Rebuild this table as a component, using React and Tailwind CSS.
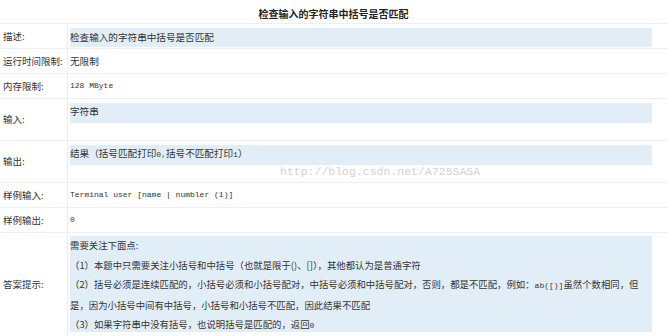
import React from 'react';

const cjk = { fontFamily: '"Noto Sans CJK SC", "Noto Sans", sans-serif' };
const mono = { fontFamily: '"Liberation Mono", "DejaVu Sans Mono", monospace' };

function Row({ label, height, children }) {
    return (
        <div className={`flex border-b border-[#efefef] ${height}`}>
            <div className="flex w-[68px] shrink-0 items-center border-r border-[#ececec] pl-[3px] text-[9.5px] text-[#333]">
                {label}
            </div>
            <div className="w-[584px] shrink-0 pl-[2px]">{children}</div>
        </div>
    );
}

function App() {
    return (
        <div className="relative h-[336px] w-[667px] overflow-hidden bg-white text-[#333]" style={cjk}>
            <div className="flex h-[24px] items-center justify-center border-b border-[#efefef] pt-[4px] text-[10px] font-bold text-[#222]">
                检查输入的字符串中括号是否匹配
            </div>

            <Row label="描述:" height="h-[25px]">
                <div className="mt-[4px] h-[19px] bg-[#e2eef7] text-[9.6px] leading-[19px]">
                    检查输入的字符串中括号是否匹配
                </div>
            </Row>
            <Row label="运行时间限制:" height="h-[25px]">
                <div className="flex h-full items-center text-[9.6px]">无限制</div>
            </Row>
            <Row label="内存限制:" height="h-[25px]">
                <div className="flex h-full items-center text-[8px]" style={mono}>128 MByte</div>
            </Row>
            <Row label="输入:" height="h-[42px]">
                <div className="mt-[4px] h-[20px] bg-[#e2eef7] text-[9.6px] leading-[17px]">字符串</div>
            </Row>
            <Row label="输出:" height="h-[42px]">
                <div className="mt-[4px] h-[20px] bg-[#e2eef7] text-[9.6px] leading-[17px]">
                    结果（括号匹配打印<span style={mono} className="text-[8px]">0,</span>括号不匹配打印<span style={mono} className="text-[8px]">1</span>）
                </div>
            </Row>
            <Row label="样例输入:" height="h-[25px]">
                <div className="flex h-full items-center whitespace-pre text-[8px]" style={mono}>
                    Terminal user [name | numbler (1)]
                </div>
            </Row>
            <Row label="样例输出:" height="h-[25px]">
                <div className="flex h-full items-center text-[8px]" style={mono}>0</div>
            </Row>
            <Row label="答案提示:" height="h-[104px]">
                <div className="mt-[3px] h-[96px] bg-[#e2eef7] text-[9.4px] leading-[19.5px]">
                    <div>需要关注下面点:</div>
                    <div className="whitespace-nowrap">（1）本题中只需要关注小括号和中括号（也就是限于()、[]），其他都认为是普通字符</div>
                    <div className="whitespace-nowrap">
                        （2）括号必须是连续匹配的，小括号必须和小括号配对，中括号必须和中括号配对，否则，都是不匹配，例如：<span style={mono} className="text-[8px]">ab([)]</span>虽然个数相同，但
                    </div>
                    <div className="whitespace-nowrap">是，因为小括号中间有中括号，小括号和小括号不匹配，因此结果不匹配</div>
                    <div className="whitespace-nowrap">（3）如果字符串中没有括号，也说明括号是匹配的，返回<span style={mono} className="text-[8px]">0</span></div>
                </div>
            </Row>

            <div className="absolute left-[280px] top-[163px] whitespace-nowrap text-[11.5px] text-[#d2d2d2]" style={mono}>
                http://blog.csdn.net/A725SASA
            </div>
        </div>
    );
}

export default App;
